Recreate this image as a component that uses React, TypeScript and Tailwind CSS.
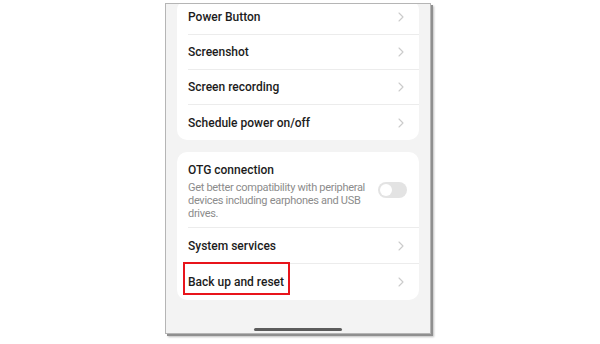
import React from "react";

function Chevron() {
  return (
    <svg width="6" height="10" viewBox="0 0 6 10" fill="none" className="shrink-0">
      <path d="M1 1l4 4-4 4" stroke="#cbcbcb" strokeWidth="1.1" strokeLinecap="round" strokeLinejoin="round" />
    </svg>
  );
}

function Row({ label, h, divider = true }: { label: string; h: string; divider?: boolean }) {
  return (
    <div className={`flex items-center justify-between pr-[15px] ${h} ${divider ? "border-b border-[#ececec]" : ""}`}>
      <span className="text-[12px] font-medium text-[#1c1c1c]">{label}</span>
      <Chevron />
    </div>
  );
}

export default function App() {
  return (
    <div className="w-[600px] h-[344px] bg-white overflow-hidden" style={{ fontFamily: "Roboto, 'Noto Sans', sans-serif" }}>
      <div className="ml-[165px] mt-[3px] w-[266px] h-[331px] border border-[#b5b5b5] bg-[#f3f3f3] overflow-hidden relative shadow-[2px_2px_0_0_#8f8f8f,3px_3px_2px_0_#bdbdbd]">
        <div className="mx-[11px] -mt-[4px] bg-white rounded-[10px] pl-[11px]">
          <Row label="Power Button" h="h-[35px]" />
          <Row label="Screenshot" h="h-[35px]" />
          <Row label="Screen recording" h="h-[35px]" />
          <Row label="Schedule power on/off" h="h-[35px]" divider={false} />
        </div>
        <div className="mx-[11px] mt-[12px] bg-white rounded-[10px] pl-[11px] relative">
          <div className="flex items-start justify-between pr-[12px] pt-[10px] pb-[7px] border-b border-[#ececec]">
            <div className="w-[186px]">
              <div className="text-[12px] leading-[16px] font-medium text-[#1c1c1c]">OTG connection</div>
              <div className="mt-[3px] text-[11px] leading-[13px] tracking-[-0.3px] text-[#8c8c8c]">
                Get better compatibility with peripheral devices including earphones and USB drives.
              </div>
            </div>
            <div className="mt-[20px] w-[29px] h-[16px] rounded-full bg-[#e3e3e3] flex items-center pl-[2px]">
              <div className="w-[12px] h-[12px] rounded-full bg-white" />
            </div>
          </div>
          <Row label="System services" h="h-[36px]" />
          <Row label="Back up and reset" h="h-[36px]" divider={false} />
          <div className="absolute left-[6px] top-[110px] w-[107px] h-[33px] border-2 border-[#e8141b]" />
        </div>
        <div className="absolute left-[88px] top-[324px] w-[88px] h-[3px] rounded-full bg-[#5c5c5c]" />
      </div>
    </div>
  );
}
